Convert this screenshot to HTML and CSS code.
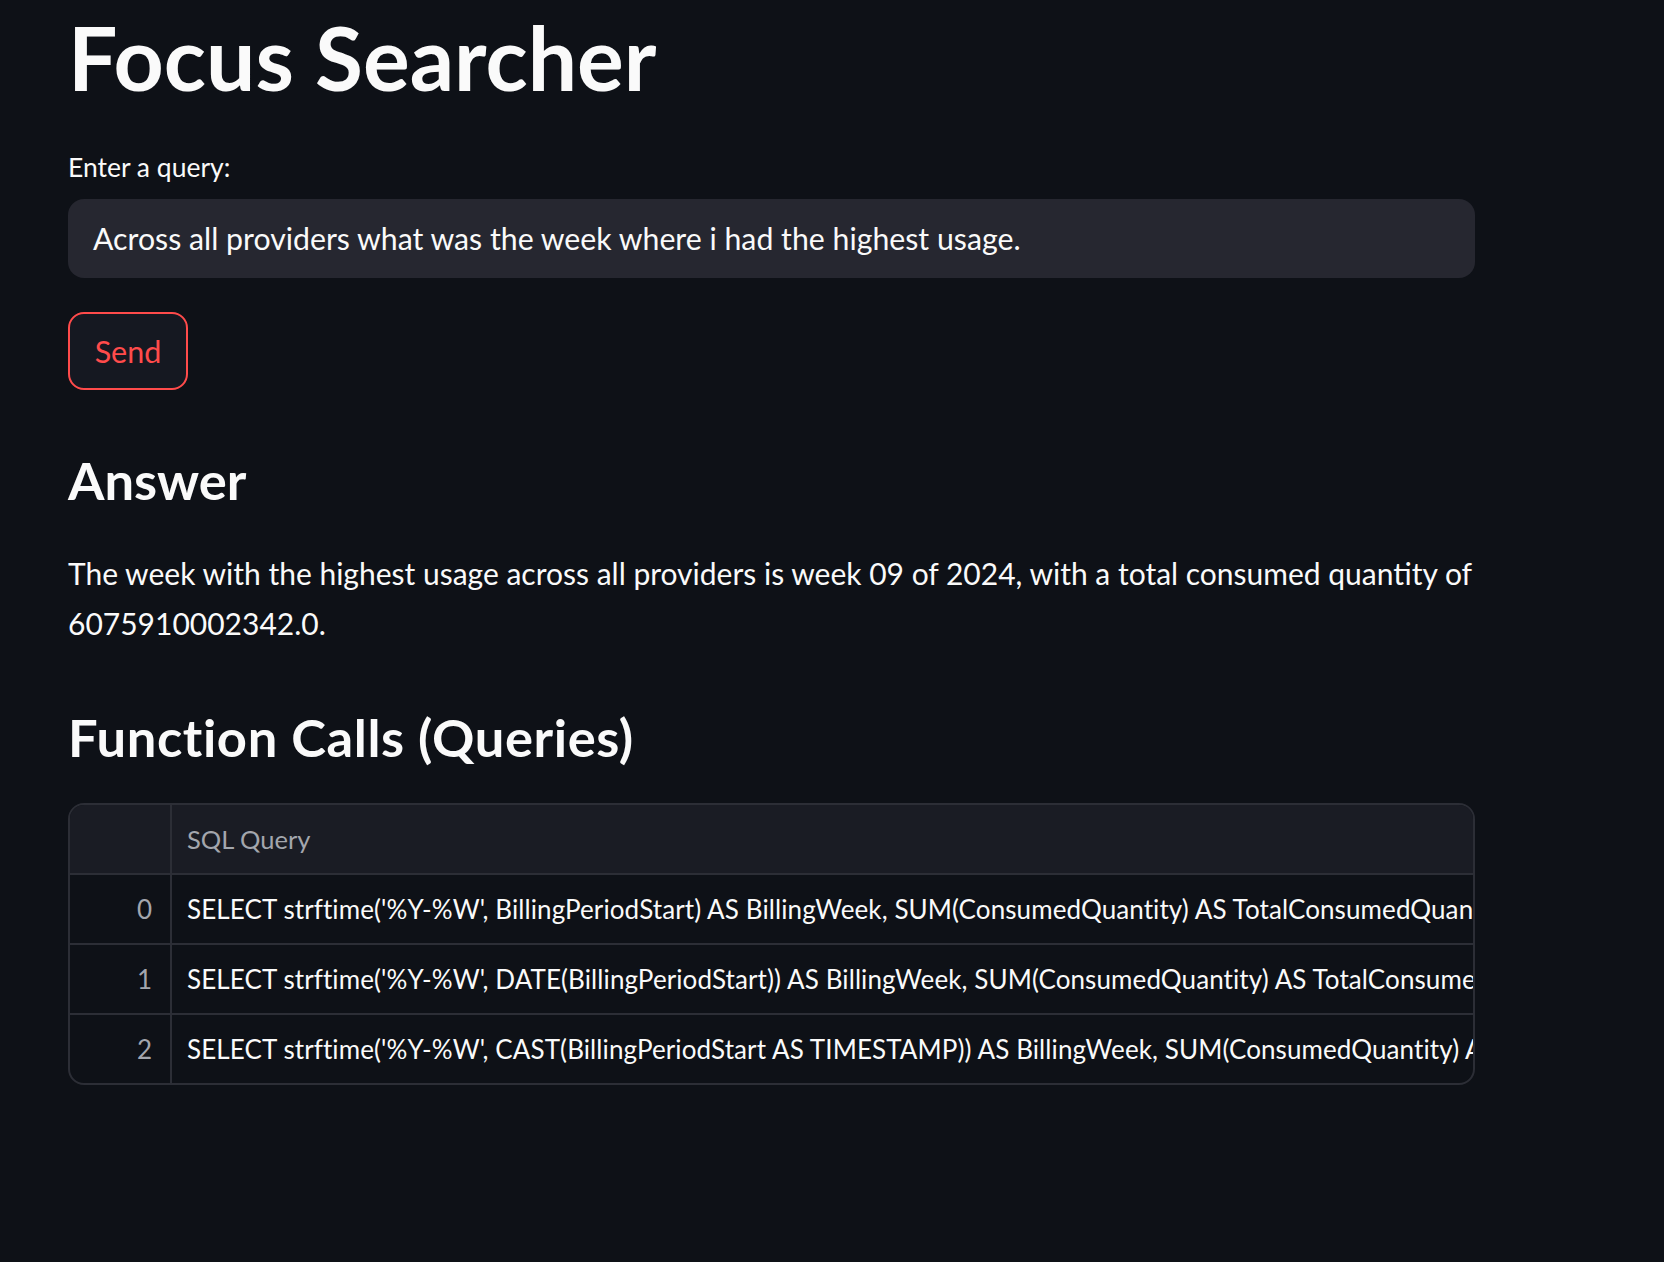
FILE: index.html
```html
<!DOCTYPE html>
<html lang="en">
<head>
<meta charset="utf-8">
<title>Focus Searcher</title>
<link rel="stylesheet" href="styles.css">
</head>
<body>
<main class="main">
  <h1 class="title">Focus Searcher</h1>
  <div class="field">
    <label class="label">Enter a query:</label>
    <div class="input">Across all providers what was the week where i had the highest usage.</div>
  </div>
  <button class="btn">Send</button>
  <h3 class="sub sub-answer">Answer</h3>
  <p class="para">The week with the highest usage across all providers is week 09 of 2024, with a total consumed quantity of 6075910002342.0.</p>
  <h3 class="sub sub-calls">Function Calls (Queries)</h3>
  <div class="table">
    <div class="row head">
      <div class="idx"></div>
      <div class="cell">SQL Query</div>
    </div>
    <div class="row">
      <div class="idx">0</div>
      <div class="cell">SELECT strftime('%Y-%W', BillingPeriodStart) AS BillingWeek, SUM(ConsumedQuantity) AS TotalConsumedQuantity FROM data GROUP BY BillingWeek ORDER BY TotalConsumedQuantity DESC LIMIT 1</div>
    </div>
    <div class="row">
      <div class="idx">1</div>
      <div class="cell">SELECT strftime('%Y-%W', DATE(BillingPeriodStart)) AS BillingWeek, SUM(ConsumedQuantity) AS TotalConsumedQuantity FROM data GROUP BY BillingWeek ORDER BY TotalConsumedQuantity DESC LIMIT 1</div>
    </div>
    <div class="row last">
      <div class="idx">2</div>
      <div class="cell">SELECT strftime('%Y-%W', CAST(BillingPeriodStart AS TIMESTAMP)) AS BillingWeek, SUM(ConsumedQuantity) AS TotalConsumedQuantity FROM data GROUP BY BillingWeek ORDER BY TotalConsumedQuantity DESC LIMIT 1</div>
    </div>
  </div>
</main>
</body>
</html>
```

FILE: styles.css
```css
* { box-sizing: border-box; }
html, body {
  margin: 0;
  padding: 0;
  background: #0e1117;
  color: #fafafa;
  font-family: Lato, "Noto Sans", sans-serif;
}
.main {
  padding: 8px 0 0 68px;
  width: 1475px;
}
.title {
  margin: 0;
  font-size: 87.5px;
  line-height: 100px;
  font-weight: 700;
}
.field {
  margin-top: 41px;
  display: flex;
  flex-direction: column;
}
.label {
  font-size: 26.5px;
  line-height: 36px;
  height: 36px;
}
.input {
  margin-top: 14px;
  height: 79px;
  line-height: 79px;
  background: #262730;
  border-radius: 16px;
  padding-left: 25px;
  font-size: 30.25px;
  white-space: nowrap;
}
.btn {
  margin-top: 34px;
  display: block;
  width: 120px;
  height: 78px;
  padding: 0;
  border: 2px solid #ff4b4b;
  border-radius: 16px;
  background: #151821;
  color: #ff4b4b;
  font-family: inherit;
  font-size: 30.5px;
  line-height: 74px;
}
.sub {
  margin: 0;
  font-size: 52.5px;
  line-height: 70px;
  font-weight: 700;
}
.sub-answer { margin-top: 55px; }
.para {
  margin: 33px 0 0;
  font-size: 30px;
  line-height: 50px;
  width: 1440px;
}
.sub-calls { margin-top: 54px; letter-spacing: 0.6px; }
.table {
  margin-top: 31px;
  border: 2px solid #2c2e36;
  border-radius: 16px;
  overflow: hidden;
  font-size: 26px;
}
.row {
  display: flex;
  height: 70px;
  border-bottom: 2px solid #2c2e36;
}
.row.last { height: 68px; border-bottom: 0; }
.head { background: #1a1c24; color: #a3a6ad; font-size: 25.5px; }
.idx {
  flex: 0 0 102px;
  border-right: 2px solid #2c2e36;
  text-align: right;
  padding-right: 18px;
  line-height: 68px;
  color: #a3a6ad;
}
.cell {
  flex: 1;
  padding-left: 15px;
  line-height: 68px;
  white-space: nowrap;
  overflow: hidden;
  letter-spacing: 0.1px;
}
.head .cell { letter-spacing: 0; }
```
